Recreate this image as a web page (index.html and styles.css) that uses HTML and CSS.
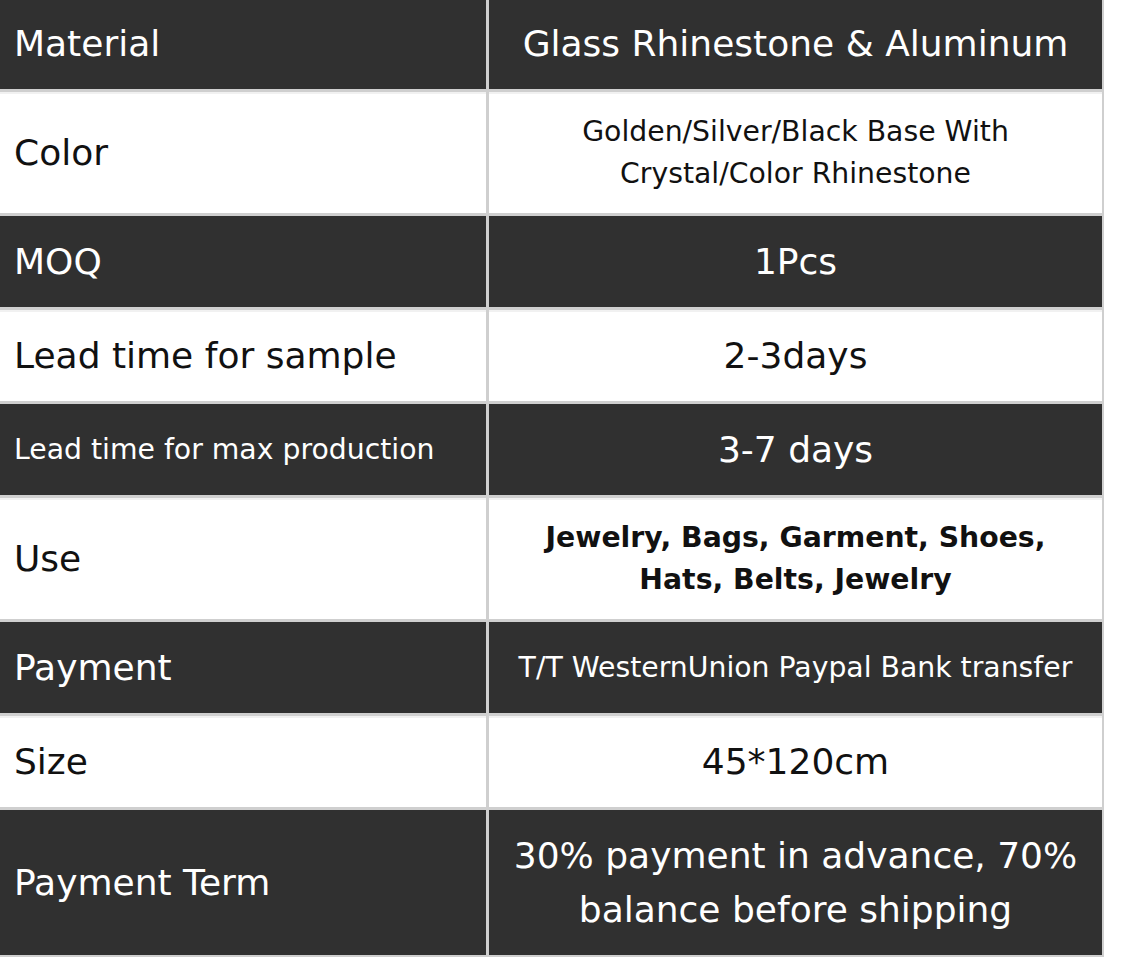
FILE: index.html
```html
<!DOCTYPE html>
<html>
<head>
<meta charset="utf-8">
<link rel="stylesheet" href="styles.css">
</head>
<body>
<div class="spec">
  <div class="cell key dark big">Material</div>
  <div class="cell val dark big">Glass Rhinestone &amp; Aluminum</div>

  <div class="cell key light big">Color</div>
  <div class="cell val light small">Golden/Silver/Black Base With<br>Crystal/Color Rhinestone</div>

  <div class="cell key dark big">MOQ</div>
  <div class="cell val dark big">1Pcs</div>

  <div class="cell key light big">Lead time for sample</div>
  <div class="cell val light big">2-3days</div>

  <div class="cell key dark small">Lead time for max production</div>
  <div class="cell val dark big">3-7 days</div>

  <div class="cell key light big">Use</div>
  <div class="cell val light small bold">Jewelry, Bags, Garment, Shoes,<br>Hats, Belts, Jewelry</div>

  <div class="cell key dark big">Payment</div>
  <div class="cell val dark small">T/T WesternUnion Paypal Bank transfer</div>

  <div class="cell key light big">Size</div>
  <div class="cell val light big">45*120cm</div>

  <div class="cell key dark big">Payment Term</div>
  <div class="cell val dark big">30% payment in advance, 70%<br>balance before shipping</div>
</div>
</body>
</html>
```

FILE: styles.css
```css
html, body {
  margin: 0;
  padding: 0;
  background: #ffffff;
}

body {
  font-family: "DejaVu Sans", Verdana, sans-serif;
}

.spec {
  width: 1102px;
  margin-top: -2px;
  display: grid;
  grid-template-columns: 486px 613px;
  column-gap: 3px;
  row-gap: 3px;
  background: #cfcfcf;
  padding-right: 2px;
  padding-bottom: 2px;
}

.cell {
  display: flex;
  align-items: center;
  padding: 18.5px 0;
}

.key {
  padding-left: 14px;
  justify-content: flex-start;
}

.val {
  justify-content: center;
  text-align: center;
}

.dark {
  background: #303030;
  color: #ffffff;
}

.light {
  background: #ffffff;
  color: #111111;
  box-shadow: inset 0 2px 0 #f1f1f1;
}

.big {
  font-size: 36px;
  line-height: 54px;
}

.small {
  font-size: 28.3px;
  line-height: 42px;
}

.bold {
  font-weight: bold;
}
```
